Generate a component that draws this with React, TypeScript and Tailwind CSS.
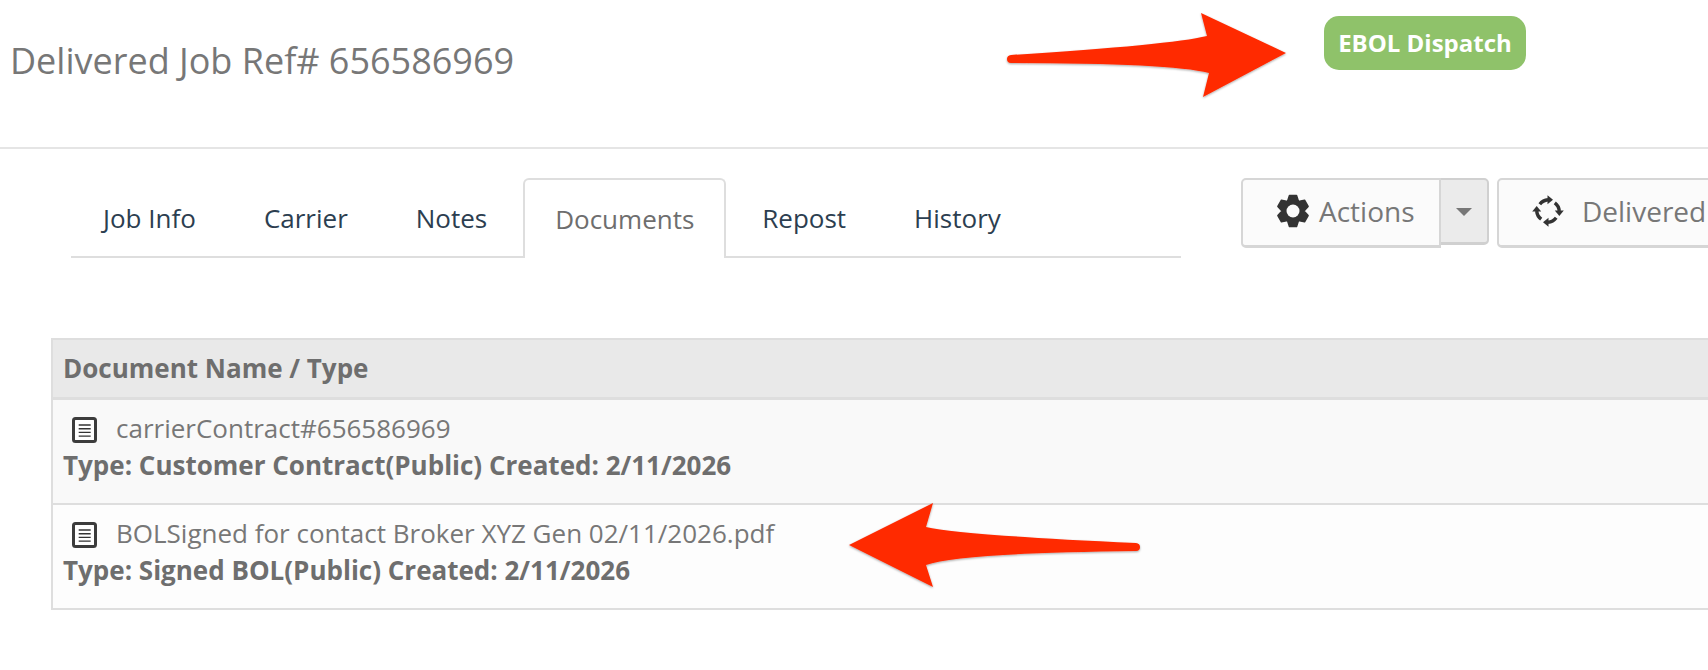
const tabs = ["Job Info", "Carrier", "Notes", "Documents", "Repost", "History"];

const docs = [
  { name: "carrierContract#656586969", type: "Type: Customer Contract(Public) Created: 2/11/2026", bg: "bg-[#f9f9f9]" },
  { name: "BOLSigned for contact Broker XYZ Gen 02/11/2026.pdf", type: "Type: Signed BOL(Public) Created: 2/11/2026", bg: "bg-[#fdfdfd]" },
];

const cogPoints = [-150, -90, -30, 30, 90, 150]
  .flatMap((a) => [
    [15.8, a - 13],
    [15.8, a + 13],
    [11, a + 30],
  ])
  .map(([r, deg]) => {
    const rad = (deg * Math.PI) / 180;
    return `${(17 + r * Math.cos(rad)).toFixed(2)} ${(17 + r * Math.sin(rad)).toFixed(2)}`;
  });

const CogIcon = () => (
  <svg width="34" height="34" viewBox="0 0 34 34" className="shrink-0">
    <path d={`M${cogPoints.join("L")}Z`} fill="#333" stroke="#333" strokeWidth="1.500" strokeLinejoin="round" />
    <circle cx="17" cy="17" r="6.500" fill="#fbfbfb" />
  </svg>
);

const DocIcon = () => (
  <svg width="25" height="26" viewBox="0 0 25 26" className="shrink-0">
    <rect x="1.500" y="1.500" width="22" height="23" rx="2" fill="#fff" stroke="#3c3c3c" strokeWidth="3" />
    <path d="M6.700 8h12M6.700 11.700h12M6.700 15.400h12M6.700 19.100h12" stroke="#333" strokeWidth="1.400" />
  </svg>
);

const CycleIcon = () => (
  <svg width="32" height="32" viewBox="0 0 32 32" className="shrink-0">
    {[0, 90, 180, 270].map((r) => (
      <g key={r} transform={`rotate(${r} 16 16)`}>
        <path d="M7.800 9.200A11.500 11.500 0 0 1 16 4.700" fill="none" stroke="#333" strokeWidth="3.400" />
        <path d="M15.500 0.200L21 4.700L15.500 9.200Z" fill="#333" />
      </g>
    ))}
  </svg>
);

const Arrows = () => (
  <svg width="1708" height="670" viewBox="0 0 1708 670" className="absolute left-0 top-0 pointer-events-none">
    <defs>
      <filter id="arrowShadow" x="-5%" y="-10%" width="110%" height="125%">
        <feDropShadow dx="0" dy="1" stdDeviation="0.8" floodColor="#000" floodOpacity="0.35" />
      </filter>
    </defs>
    <g fill="#ff2a00" filter="url(#arrowShadow)">
      <path d="M1286 53L1201 13L1207 36Q1170 45 1011 55Q1007 55.500 1007 59Q1007 63 1011 63Q1170 63 1209 73L1203 97Z" />
      <path d="M849 545L933 503L926 527Q960 535 1136 543Q1140 543.500 1140 547Q1140 551 1136 551Q960 553 926 565L933 587Z" />
    </g>
  </svg>
);

export default function App() {
  return (
    <div className="relative h-[670px] w-[1708px] overflow-hidden bg-white font-['Open_Sans',sans-serif] text-[#777]">
      <header className="relative h-[149px] border-b-2 border-[#e5e5e5]">
        <div className="flex h-[147px] items-start">
          <h1 className="ml-[10px] mt-[36px] text-[36px] leading-[50px] font-normal text-[#777]">Delivered Job Ref# 656586969</h1>
          <div className="ml-auto mr-[182px] mt-[16px] flex h-[54px] w-[202px] items-center justify-center rounded-[15px] bg-[#8fc26a] text-[24px] font-bold text-white">
            EBOL Dispatch
          </div>
        </div>
      </header>

      <section className="mt-[29px] flex items-start">
        <nav className="ml-[71px] flex h-[80px] w-[1110px] shrink-0 items-stretch border-b-2 border-[#dedede]">
          {tabs.map((t) =>
            t === "Documents" ? (
              <div key={t} className="relative -mb-[2px] ml-[2px] mr-[2px] flex h-[80px] w-[203px] items-center justify-center rounded-t-[6px] border-2 border-b-0 border-[#dedede] bg-white text-[26px] text-[#6e6e6e]">
                {t}
              </div>
            ) : (
              <div key={t} className="flex items-center px-[34px] pt-[3px] text-[26px] text-[#2c3e50] first:pl-[32px]">
                {t}
              </div>
            )
          )}
        </nav>

        <div className="ml-[60px] flex shrink-0 items-start">
          <div className="z-10 flex h-[70px] w-[200px] items-center gap-[9px] rounded-l-[5px] border-2 border-b-[3px] border-[#d6d6d6] bg-[#fbfbfb] pb-[3px] pl-[33px] text-[28px] text-[#777]">
            <CogIcon />
            <span>Actions</span>
          </div>
          <div className="-ml-[2px] flex h-[67px] w-[50px] items-center justify-center rounded-r-[5px] border-2 border-b-[3px] border-[#d0d0d0] bg-[#ebebeb]">
            <span className="mt-[2px] h-0 w-0 border-x-[8px] border-t-[8px] border-x-transparent border-t-[#777]" />
          </div>
          <div className="ml-[8px] flex h-[70px] w-[260px] shrink-0 items-center gap-[18px] rounded-l-[5px] border-2 border-b-[3px] border-[#d6d6d6] bg-[#fbfbfb] pb-[3px] pl-[33px] text-[28px] text-[#777]">
            <CycleIcon />
            <span>Delivered</span>
          </div>
        </div>
      </section>

      <section className="ml-[51px] mt-[80px] w-[1700px]">
        <div className="h-[62px] border-2 border-b-[3px] border-[#dedede] bg-[#e9e9e9] pl-[10px] text-[26px] leading-[56px] font-bold text-[#6e6e6e]">
          Document Name / Type
        </div>
        {docs.map((d) => (
          <div key={d.name} className={`h-[105px] border-2 border-t-0 border-[#dedede] pl-[10px] pt-[16px] ${d.bg}`}>
            <div className="flex h-[27px] items-center pl-[9px] text-[26px] text-[#777]">
              <DocIcon />
              <span className="ml-[19px] -translate-y-[1px]">{d.name}</span>
            </div>
            <div className="mt-[6px] text-[26px] leading-[33px] font-bold text-[#6e6e6e]">{d.type}</div>
          </div>
        ))}
      </section>

      <Arrows />
    </div>
  );
}
